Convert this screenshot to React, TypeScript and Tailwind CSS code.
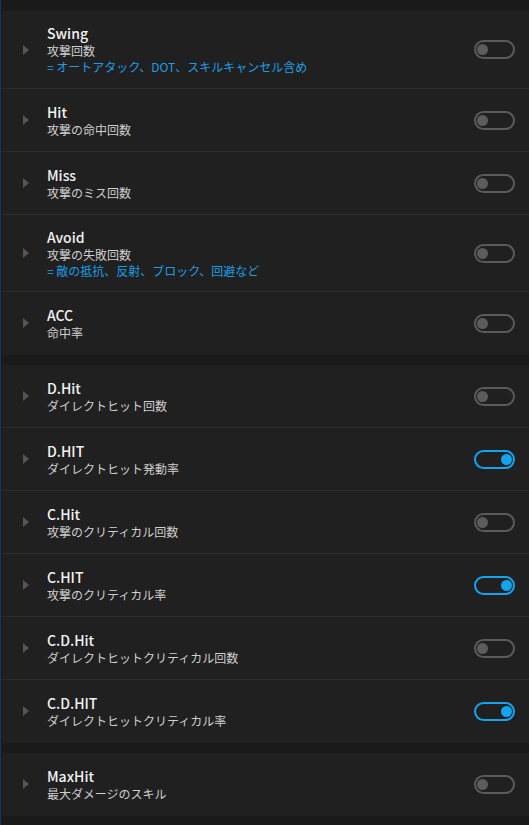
import React from "react";

type Item = { title: string; sub: string; note?: string; on?: boolean; tall?: "a" | "b" };

const groups: Item[][] = [
  [
    { title: "Swing", sub: "攻撃回数", note: "= オートアタック、DOT、スキルキャンセル含め", tall: "a" },
    { title: "Hit", sub: "攻撃の命中回数" },
    { title: "Miss", sub: "攻撃のミス回数" },
    { title: "Avoid", sub: "攻撃の失敗回数", note: "= 敵の抵抗、反射、ブロック、回避など", tall: "b" },
    { title: "ACC", sub: "命中率" },
  ],
  [
    { title: "D.Hit", sub: "ダイレクトヒット回数" },
    { title: "D.HIT", sub: "ダイレクトヒット発動率", on: true },
    { title: "C.Hit", sub: "攻撃のクリティカル回数" },
    { title: "C.HIT", sub: "攻撃のクリティカル率", on: true },
    { title: "C.D.Hit", sub: "ダイレクトヒットクリティカル回数" },
    { title: "C.D.HIT", sub: "ダイレクトヒットクリティカル率", on: true },
  ],
  [{ title: "MaxHit", sub: "最大ダメージのスキル" }],
];

function Toggle({ on }: { on?: boolean }) {
  return on ? (
    <div className="w-[41px] h-[19px] rounded-full border-2 border-[#14a3ee] flex items-center justify-end pr-[1px]">
      <div className="w-[11px] h-[11px] rounded-full bg-[#14a3ee]" />
    </div>
  ) : (
    <div className="w-[41px] h-[19px] rounded-full border-2 border-[#5a5a5a] flex items-center justify-start pl-[1px]">
      <div className="w-[11px] h-[11px] rounded-full bg-[#5c5c5c]" />
    </div>
  );
}

function Row({ item, last }: { item: Item; last: boolean }) {
  const h = item.tall === "a" ? "h-[78px]" : item.tall === "b" ? "h-[77px]" : "h-[63px]";
  return (
    <div
      className={
        "flex items-center pr-[14px] border-b " +
        h +
        " " +
        (last ? "border-[#202020]" : "border-[#2c2c2c]")
      }
    >
      <div className="w-[45px] pl-[21px] flex items-center">
        <svg width="6" height="10" viewBox="0 0 6 10">
          <path d="M0 0 L6 5 L0 10 Z" fill="#555555" />
        </svg>
      </div>
      <div className="flex-1 flex flex-col">
        <div className="text-[14px] leading-[19px] font-medium text-[#f2f2f2]">{item.title}</div>
        <div className="text-[12px] leading-[16px] text-[#cfcfcf]">{item.sub}</div>
        {item.note && (
          <div className="text-[12px] leading-[16px] text-[#1e9de4]">{item.note}</div>
        )}
      </div>
      <Toggle on={item.on} />
    </div>
  );
}

export default function App() {
  return (
    <div
      className="w-[529px] h-[825px] bg-[#1a1a1a] border-l border-[#0d3a66] pl-[1px] pt-[11px] flex flex-col gap-[10px] overflow-hidden"
      style={{ fontFamily: '"Noto Sans CJK JP", "Noto Sans", sans-serif' }}
    >
      {groups.map((g, gi) => (
        <div key={gi} className="bg-[#202020] flex flex-col">
          {g.map((it, i) => (
            <Row key={it.title} item={it} last={i === g.length - 1} />
          ))}
        </div>
      ))}
    </div>
  );
}
